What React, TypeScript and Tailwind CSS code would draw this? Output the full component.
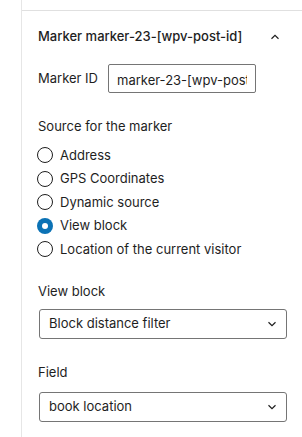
import React from "react";

const font = { fontFamily: "Inter, 'Noto Sans', sans-serif" };

function Radio({ label, checked }: { label: string; checked?: boolean }) {
  return (
    <div className="flex items-center h-[23.5px]">
      {checked ? (
        <span className="w-[16px] h-[16px] rounded-full bg-[#0b72b5] flex items-center justify-center shrink-0">
          <span className="w-[6px] h-[6px] rounded-full bg-white" />
        </span>
      ) : (
        <span className="w-[16px] h-[16px] rounded-full border border-[#1e1e1e] shrink-0" />
      )}
      <span className="ml-[7px] text-[13px] text-[#1e1e1e]">{label}</span>
    </div>
  );
}

function Chevron() {
  return (
    <svg width="14" height="14" viewBox="0 0 24 24" fill="none" stroke="#1e1e1e" strokeWidth="2">
      <path d="M6 9l6 6 6-6" />
    </svg>
  );
}

function Select({ value }: { value: string }) {
  return (
    <div className="ml-[39px] w-[248px] h-[30px] border border-[#757575] rounded-[3px] flex items-center justify-between pl-[9px] pr-[7px]">
      <span className="text-[13px] text-[#1e1e1e]">{value}</span>
      <Chevron />
    </div>
  );
}

export default function App() {
  return (
    <div className="w-[302px] h-[437px] bg-white overflow-hidden relative" style={font}>
      <div className="absolute left-[21px] top-0 bottom-0 w-px bg-[#e6e6e6]" />
      <div className="h-[10px]" />
      <div className="ml-[22px] border-t border-[#e0e0e0]">
        <div className="flex items-center justify-between h-[41px] mt-[5px] pl-[16px] pr-[20px]">
          <span className="text-[13px] font-medium text-[#1e1e1e]">Marker marker-23-[wpv-post-id]</span>
          <svg width="14" height="14" viewBox="0 0 24 24" fill="none" stroke="#1e1e1e" strokeWidth="2">
            <path d="M6 15l6-6 6 6" />
          </svg>
        </div>
      </div>
      <div className="flex items-center mt-[7px] pl-[38px]">
        <span className="text-[13px] text-[#1e1e1e] w-[70px]">Marker ID</span>
        <div className="w-[148px] h-[29px] border border-[#757575] rounded-[2px] flex items-center px-[8px]">
          <div className="overflow-hidden whitespace-nowrap w-full">
            <span className="text-[13px] text-[#1e1e1e]">marker-23-[wpv-post-id]</span>
          </div>
        </div>
      </div>
      <div className="pl-[38px] mt-[24px] text-[13px] text-[#1e1e1e]">Source for the marker</div>
      <div className="pl-[37px] mt-[7px] flex flex-col">
        <Radio label="Address" />
        <Radio label="GPS Coordinates" />
        <Radio label="Dynamic source" />
        <Radio label="View block" checked />
        <Radio label="Location of the current visitor" />
      </div>
      <div className="pl-[38px] mt-[21px] text-[13px] text-[#1e1e1e]">View block</div>
      <div className="mt-[7.5px]">
        <Select value="Block distance filter" />
      </div>
      <div className="pl-[38px] mt-[24px] text-[13px] text-[#1e1e1e]">Field</div>
      <div className="mt-[9px]">
        <Select value="book location" />
      </div>
    </div>
  );
}
